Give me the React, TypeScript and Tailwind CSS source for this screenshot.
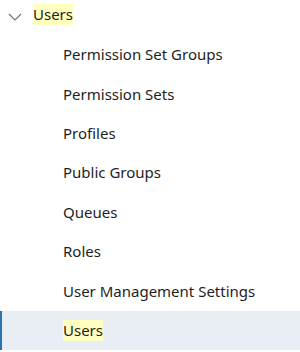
import React from 'react';

const items = [
  'Permission Set Groups',
  'Permission Sets',
  'Profiles',
  'Public Groups',
  'Queues',
  'Roles',
  'User Management Settings',
  'Users',
];

const Chevron = () => (
  <svg width="14" height="8" viewBox="0 0 14 8" fill="none" className="shrink-0 mt-[4px]">
    <path d="M1 1l6 6 6-6" stroke="#707070" strokeWidth="1.1" />
  </svg>
);

export default function App() {
  return (
    <div
      className="w-[300px] h-[352px] bg-white overflow-hidden text-[15px] text-[#1e1e1e]"
      style={{ fontFamily: '"Segoe UI", "Noto Sans", sans-serif' }}
    >
      <div className="flex items-center h-[35px] pl-[8px] pb-[6px]">
        <Chevron />
        <span className="ml-[11px] bg-[#ffffc0] leading-[21px]">Users</span>
      </div>
      <ul>
        {items.map((label, i) => {
          const selected = i === items.length - 1;
          return (
            <li
              key={label}
              className={
                selected
                  ? 'flex items-center h-[39.4px] pl-[61px] bg-[#e8eef3] border-l-2 border-[#2b73ae]'
                  : 'flex items-center h-[39.4px] pl-[63px]'
              }
            >
              <span className={selected ? 'leading-[21px] bg-[#ffffc0]' : 'leading-[21px]'}>{label}</span>
            </li>
          );
        })}
      </ul>
    </div>
  );
}
